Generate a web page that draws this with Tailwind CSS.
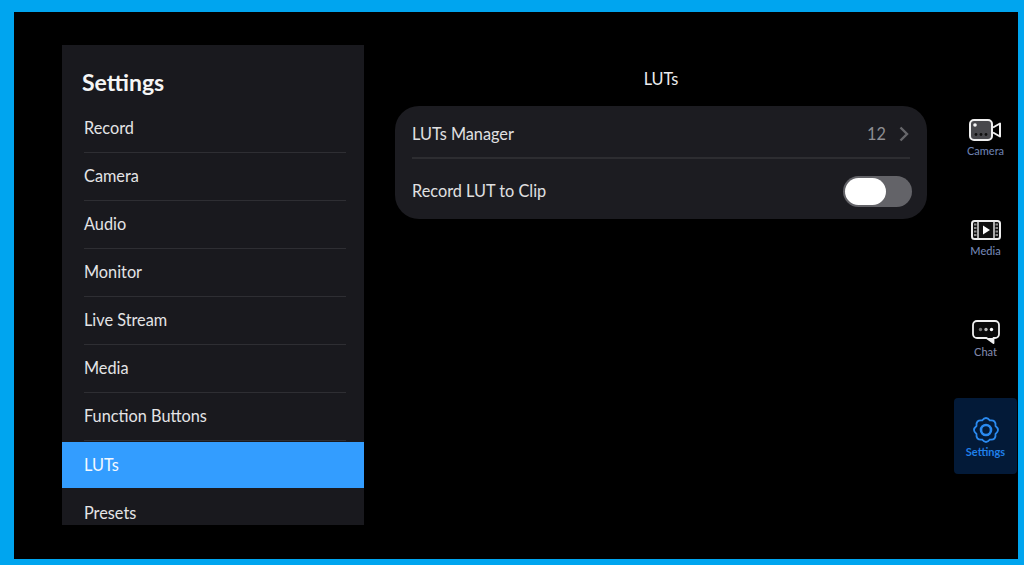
<!DOCTYPE html>
<html>
<head>
<meta charset="utf-8">
<script src="https://cdn.jsdelivr.net/npm/@tailwindcss/browser@4"></script>
</head>
<body class="bg-black">
<div class="w-[1024px] h-[565px] overflow-hidden bg-[#00a5ef] pt-[12px] pl-[14px] pr-[6px] pb-[6px] font-['Lato','Carlito',sans-serif]">
<div class="w-[1004px] h-[547px] bg-black flex items-start">
  <aside class="ml-[48px] mt-[33px] w-[302px] h-[480px] bg-[#19191e] overflow-hidden shrink-0">
    <h1 class="pl-[20px] pt-[23px] h-[60px] text-[23px] leading-[28px] font-bold text-[#f5f5f5]">Settings</h1>
    <ul class="text-[16.300px] text-[#e4e4e6]">
      <li class="h-[48px] ml-[22px] mr-[18px] border-b border-[#2e2e33] flex items-center pb-[1px]">Record</li>
      <li class="h-[48px] ml-[22px] mr-[18px] border-b border-[#2e2e33] flex items-center pb-[1px]">Camera</li>
      <li class="h-[48px] ml-[22px] mr-[18px] border-b border-[#2e2e33] flex items-center pb-[1px]">Audio</li>
      <li class="h-[48px] ml-[22px] mr-[18px] border-b border-[#2e2e33] flex items-center pb-[1px]">Monitor</li>
      <li class="h-[48px] ml-[22px] mr-[18px] border-b border-[#2e2e33] flex items-center pb-[1px]">Live Stream</li>
      <li class="h-[48px] ml-[22px] mr-[18px] border-b border-[#2e2e33] flex items-center pb-[1px]">Media</li>
      <li class="h-[48px] ml-[22px] mr-[18px] border-b border-[#2e2e33] flex items-center pb-[1px]">Function Buttons</li>
      <li class="h-[46px] mt-[1px] bg-[#339dff] text-[#f4f9ff] pl-[22px] flex items-center">LUTs</li>
      <li class="h-[48px] ml-[22px] mr-[18px] mt-[1px] flex items-center">Presets</li>
    </ul>
  </aside>
  <main class="ml-[31px] w-[532px] shrink-0">
    <h2 class="mt-[55px] h-[24px] text-center text-[16.300px] leading-[24px] text-[#ececee]">LUTs</h2>
    <div class="mt-[15px] h-[113px] rounded-[24px] bg-[#1c1c21] px-[17px] text-[16.300px] text-[#e0e0e2]">
      <div class="h-[53px] pt-[5px] border-b-2 border-[#2d2d31] flex items-center justify-between">
        <span>LUTs Manager</span>
        <span class="flex items-center text-[#8e8e92]">12
          <svg class="ml-[13px] mr-[1px]" width="10" height="16" viewBox="0 0 10 16" fill="none" stroke="#66666a" stroke-width="2.400"><path d="M1.500 1.500 8 8l-6.500 6.500"/></svg>
        </span>
      </div>
      <div class="h-[60px] pt-[4px] flex items-center justify-between">
        <span>Record LUT to Clip</span>
        <span class="w-[69px] h-[31px] -mr-[2px] rounded-full bg-[#636368] block p-[2px]">
          <span class="block w-[41px] h-[27px] rounded-full bg-white"></span>
        </span>
      </div>
    </div>
  </main>
  <nav class="ml-[27px] w-[63px] shrink-0 flex flex-col items-center text-[11px] leading-[14px] font-medium">
    <div class="mt-[86px] h-[76px] w-full flex flex-col items-center pt-[21px] text-[#6a7fae]">
      <svg width="33" height="22" viewBox="0 0 33 22" fill="none">
        <rect x="1" y="1" width="22" height="20" rx="4" fill="#48484c" stroke="#f0f0f0" stroke-width="2"/>
        <circle cx="6" cy="6" r="1.800" fill="#f4f4f4"/>
        <circle cx="7" cy="15.500" r="1.400" fill="#101010"/><circle cx="12" cy="15.500" r="1.400" fill="#101010"/><circle cx="17" cy="15.500" r="1.400" fill="#101010"/>
        <path d="M24 8.500l7-4v13l-7-4" stroke="#f0f0f0" stroke-width="2" stroke-linejoin="round" fill="#000"/>
      </svg>
      <span class="mt-[3px]">Camera</span>
    </div>
    <div class="mt-[24px] h-[76px] w-full flex flex-col items-center pt-[22px] text-[#7385b3]">
      <svg width="30" height="20" viewBox="0 0 30 20" fill="none">
        <rect x="1" y="1" width="28" height="18" rx="2.500" stroke="#eee" stroke-width="2" fill="#111"/>
        <path d="M7 1.500v17M23 1.500v17" stroke="#ddd" stroke-width="1.500"/>
        <path d="M3 4.500h2.500M3 8h2.500M3 11.500h2.500M3 15h2.500M24.500 4.500H27M24.500 8H27M24.500 11.500H27M24.500 15H27" stroke="#8a8a8a" stroke-width="2"/>
        <path d="M12 5.500l7 4.500-7 4.500z" fill="#fff"/>
      </svg>
      <span class="mt-[4px]">Media</span>
    </div>
    <div class="mt-[24px] h-[76px] w-full flex flex-col items-center pt-[22px] text-[#7f86a8]">
      <svg width="28" height="25" viewBox="0 0 28 25" fill="none">
        <path d="M5 1h18a4 4 0 0 1 4 4v9a4 4 0 0 1-4 4h-1.500v5L14.500 18H5a4 4 0 0 1-4-4V5a4 4 0 0 1 4-4z" stroke="#f0f0f0" stroke-width="1.800" fill="#0a0a0a" stroke-linejoin="round"/>
        <path d="M22 18v5.500L15 18z" fill="#f0f0f0"/>
        <circle cx="8.500" cy="9.500" r="1.700" fill="#777"/><circle cx="14" cy="9.500" r="1.700" fill="#bbb"/><circle cx="19.500" cy="9.500" r="1.700" fill="#fff"/>
      </svg>
      <span>Chat</span>
    </div>
    <div class="mt-[24px] h-[76px] w-full rounded-[4px] bg-[#031a38] flex flex-col items-center pt-[18px] text-[#1f7fe8] font-bold">
      <svg width="28" height="28" viewBox="0 0 28 28" fill="none" stroke="#2a8af0" stroke-width="1.800" stroke-linejoin="round">
        <path d="M10.060 4.480Q14 -.5 17.940 4.480Q24.250 3.750 23.520 10.060Q28.500 14 23.520 17.940Q24.250 24.250 17.940 23.520Q14 28.500 10.060 23.520Q3.750 24.250 4.480 17.940Q-.5 14 4.480 10.060Q3.750 3.750 10.060 4.480Z"/>
        <circle cx="14" cy="14" r="5" stroke-width="2.600"/>
      </svg>
      <span class="mt-[1px]">Settings</span>
    </div>
  </nav>
</div>
</div>
</body>
</html>
